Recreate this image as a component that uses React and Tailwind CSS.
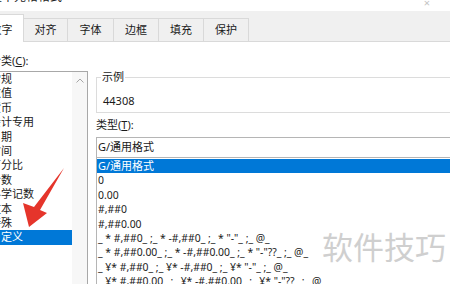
import React from "react";

const leftItems = ["常规", "数值", "货币", "会计专用", "日期", "时间", "百分比", "分数", "科学记数", "文本", "特殊", "自定义"];
const typeItems = [
  "G/通用格式",
  "0",
  "0.00",
  "#,##0",
  "#,##0.00",
  '_ * #,##0_ ;_ * -#,##0_ ;_ * "-"_ ;_ @_',
  '_ * #,##0.00_ ;_ * -#,##0.00_ ;_ * "-"??_ ;_ @_',
  '_ ¥* #,##0_ ;_ ¥* -#,##0_ ;_ ¥* "-"_ ;_ @_',
  '_ ¥* #,##0.00_ ;_ ¥* -#,##0.00_ ;_ ¥* "-"??_ ;_ @_',
];
const tabs = ["对齐", "字体", "边框", "填充", "保护"];

export default function App() {
  return (
    <div
      className="relative w-[450px] h-[284px] overflow-hidden bg-white text-[11px] text-[#1a1a1a]"
      style={{ fontFamily: '"Noto Sans", "Noto Sans CJK SC", sans-serif' }}
    >
      {/* title bar */}
      <div className="h-[11px] bg-white flex items-start justify-between overflow-hidden">
        <div className="ml-[-22px] mt-[-9px] text-[12px] leading-[12px] text-[#222] whitespace-nowrap">设置单元格格式</div>
        <div className="mr-[20px] mt-[-3px] text-[11px] leading-[11px] text-[#c4c4c4]">×</div>
      </div>

      {/* tab band */}
      <div className="h-[31px] bg-[#f0f0f0] flex items-end border-b border-[#d9d9d9]">
        <div className="ml-[-20px] w-[44px] h-[28px] mb-[-1px] bg-white border-r border-t border-[#d9d9d9] flex items-center justify-center pt-[3px] relative z-10">
          数字
        </div>
        {tabs.map((t, i) => (
          <div
            key={t}
            className={
              "h-[23px] flex items-center justify-center border-t border-r border-[#d9d9d9] bg-[#f0f0f0] " +
              (i === 0 ? "w-[44px]" : i === 1 ? "w-[46px]" : "w-[45px]")
            }
          >
            {t}
          </div>
        ))}
      </div>

      {/* content */}
      <div className="flex">
        {/* left column */}
        <div className="ml-[-12px] w-[100px] shrink-0 flex flex-col">
          <div className="h-[29px] pl-[2px] flex items-end pb-[4px] leading-[12px] whitespace-nowrap">
            分类(<span className="underline">C</span>):
          </div>
          <div className="h-[250px] border border-[#a8a8a8] flex">
            <div className="flex-1 flex flex-col">
              {leftItems.map((t) => (
                <div
                  key={t}
                  className={
                    "h-[14.4px] leading-[14.4px] pl-[1px] whitespace-nowrap " +
                    (t === "自定义" ? "bg-[#0078d7] text-white" : "")
                  }
                >
                  {t}
                </div>
              ))}
            </div>
            <div className="w-[15px] bg-[#f7f7f7] flex justify-center pt-[6px]">
              <svg width="8" height="5" viewBox="0 0 8 5">
                <path d="M0.5 4.5 L4 1 L7.5 4.5" fill="none" stroke="#a6a6a6" strokeWidth="1" />
              </svg>
            </div>
          </div>
        </div>

        {/* right column */}
        <div className="ml-[8px] flex-1 flex flex-col">
          <div className="mt-[35px] h-[36px] mr-[-10px] border border-[#dcdcdc] relative">
            <span className="absolute left-[4px] top-[-8px] bg-white px-[1px] leading-[14px]">示例</span>
            <div className="pl-[6px] pt-[16px] leading-[14px]">44308</div>
          </div>
          <div className="mt-[6px] h-[12px] leading-[12px]">
            类型(<span className="underline">T</span>):
          </div>
          <div className="mt-[6px] h-[21px] mr-[-10px] border border-[#b5b5b5] flex items-center pl-[1px]">
            G/通用格式
          </div>
          <div className="mr-[-10px] h-[140px] border-l border-[#b5b5b5] flex flex-col pt-[1px]">
            {typeItems.map((t, i) => (
              <div
                key={i}
                className={
                  "h-[14.4px] leading-[14.4px] pl-[1px] whitespace-pre " +
                  (i === 0 ? "bg-[#0078d7] text-white" : "text-[10.4px]")
                }
              >
                {t}
              </div>
            ))}
          </div>
        </div>
      </div>

      {/* watermark */}
      <div
        className="absolute left-[322px] top-[226px] text-[31px] leading-[40px] text-[#cfcfcf]"
        style={{ fontFamily: '"Noto Sans CJK SC", sans-serif' }}
      >
        软件技巧
      </div>

      {/* red arrow */}
      <svg className="absolute left-0 top-0" width="450" height="284" viewBox="0 0 450 284">
        <polygon points="29,227 23,203 34,207 64,168 40,210 47,213" fill="#e5352b" />
      </svg>
    </div>
  );
}
